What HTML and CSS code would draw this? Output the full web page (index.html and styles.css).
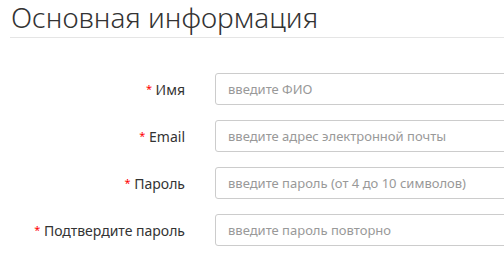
FILE: index.html
```html
<!DOCTYPE html>
<html lang="ru">
<head>
    <meta charset="UTF-8">
    <title>Основная информация</title>
    <link rel="stylesheet" href="styles.css">
</head>
<body>
    <div class="section">
        <h2 class="section-title">Основная информация</h2>

        <form class="form">
            <div class="form-row">
                <label class="form-label" for="name"><span class="req">*</span> Имя</label>
                <input class="form-input" id="name" type="text" placeholder="введите ФИО">
            </div>
            <div class="form-row">
                <label class="form-label" for="email"><span class="req">*</span> Email</label>
                <input class="form-input" id="email" type="text" placeholder="введите адрес электронной почты">
            </div>
            <div class="form-row">
                <label class="form-label" for="pass"><span class="req">*</span> Пароль</label>
                <input class="form-input" id="pass" type="password" placeholder="введите пароль (от 4 до 10 символов)">
            </div>
            <div class="form-row">
                <label class="form-label" for="pass2"><span class="req">*</span> Подтвердите пароль</label>
                <input class="form-input" id="pass2" type="password" placeholder="введите пароль повторно">
            </div>
        </form>
    </div>
</body>
</html>
```

FILE: styles.css
```css
body {
    margin: 0;
    font-family: 'Noto Sans', 'Open Sans', sans-serif;
    color: #333;
    background: #fff;
    overflow: hidden;
}

.section {
    padding: 0 0 0 11px;
}

.section-title {
    margin: 0 0 0 -1px;
    padding: 0 0 3px 1px;
    font-size: 28px;
    font-weight: 300;
    line-height: 34px;
    color: #333;
    border-bottom: 1px solid #e5e5e5;
}

.form {
    padding-top: 35px;
}

.form-row {
    display: flex;
    align-items: center;
    margin-bottom: 15px;
}

.form-label {
    flex: none;
    width: 174px;
    padding-right: 30px;
    text-align: right;
    font-size: 14px;
    color: #333;
}

.req {
    color: #f00;
    font-size: 11px;
    vertical-align: 2px;
}

.form-input {
    flex: none;
    width: 320px;
    height: 32px;
    box-sizing: border-box;
    padding: 0 12px;
    border: 1px solid #ccc;
    border-radius: 3px;
    font-family: inherit;
    font-size: 13px;
    color: #333;
}

.form-input::placeholder {
    color: #999;
}
```
